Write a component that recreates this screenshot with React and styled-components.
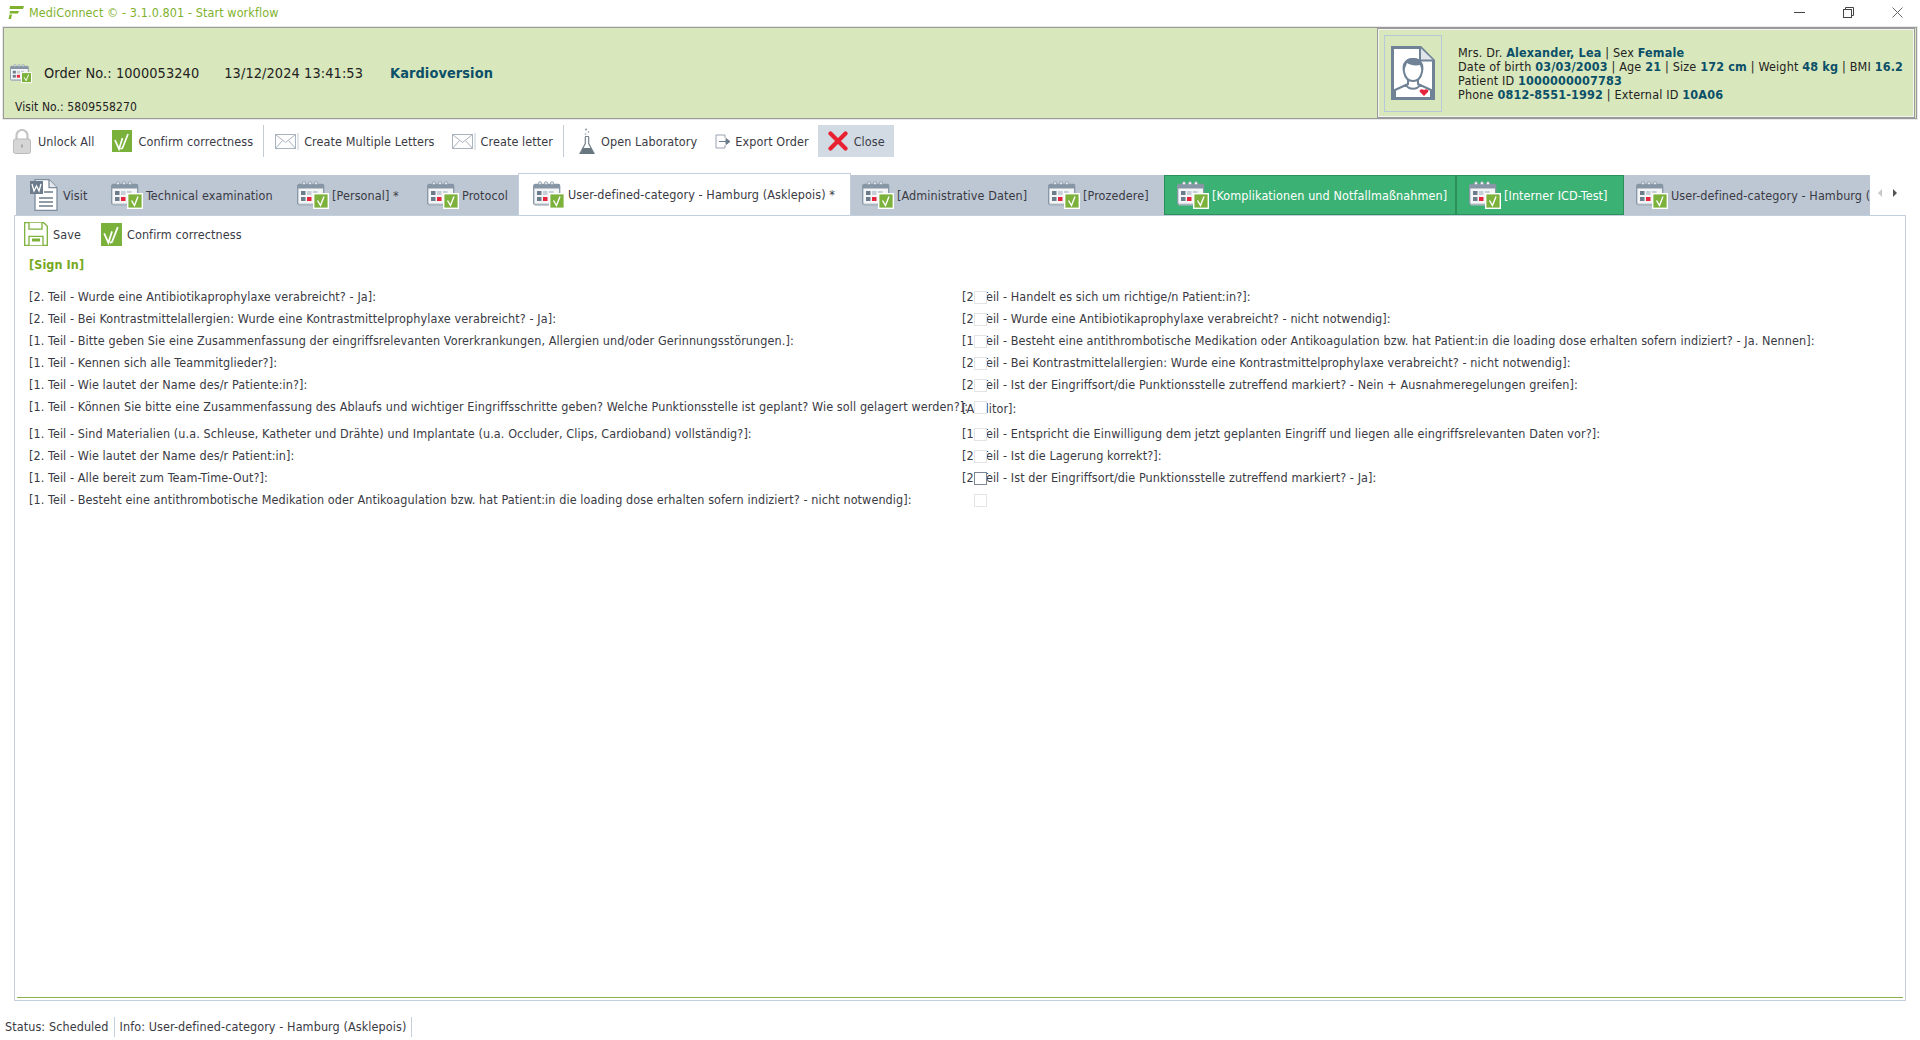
import React from "react";
import styled, { createGlobalStyle } from "styled-components";

const Global = createGlobalStyle`
  html, body { margin: 0; padding: 0; background: #fff; }
  body { width: 1920px; height: 1040px; overflow: hidden; font-family: "DejaVu Sans Condensed", "DejaVu Sans", Tahoma, sans-serif; font-size: 12.5px; letter-spacing: .09px; color: #3a3a44; }
  * { box-sizing: border-box; }
  svg { flex: none; }
`;

const Page = styled.div`
  width: 1920px; height: 1040px; display: flex; flex-direction: column; overflow: hidden;
`;
const TitleBar = styled.div`
  height: 26px; flex: none; display: flex; align-items: center; justify-content: space-between; padding: 0 17px 2px 8px;
`;
const TitleLeft = styled.div`
  display: flex; align-items: center; gap: 5px; color: #7fb22e;
`;
const WindowControls = styled.div`
  display: flex; align-items: center; gap: 38px; color: #555;
`;
const Header = styled.div`
  height: 92px; flex: none; margin: 1px 3px 0 3px; background: #d9e7bc; border: 1px solid #9a9a9a; box-shadow: 0 0 0 1px #e8e8e8; display: flex; justify-content: space-between;
`;
const OrderArea = styled.div`
  display: flex; flex-direction: column; padding: 34px 0 0 6px;
`;
const OrderLine = styled.div`
  display: flex; align-items: center; font-size: 14.4px; letter-spacing: .1px; color: #222; height: 22px;
`;
const OrderIcon = styled.span`
  display: flex; margin-right: 12px;
`;
const OrderDate = styled.span`
  margin-left: 25px;
`;
const OrderTitle = styled.span`
  margin-left: 27px; font-weight: 700; color: #0b5068;
`;
const VisitNo = styled.div`
  color: #222; font-size: 12px; margin: 16px 0 0 5px;
`;
const PatientBox = styled.div`
  width: 538px; margin: 0 1px 0 0; height: 90px; border: 1px solid #9a9a9a; outline: 1px solid #f4f4f4; outline-offset: -2px; display: flex; align-items: center; padding-left: 6px;
`;
const AvatarFrame = styled.div`
  width: 58px; height: 77px; border: 1px solid #b9c8d8; display: flex; align-items: center; justify-content: center; flex: none;
`;
const PatientText = styled.div`
  margin-left: 16px; line-height: 14px; letter-spacing: .17px; color: #222; white-space: nowrap; padding-top: 1px;
`;
const B = styled.b`
  color: #0b5068; font-weight: 700;
`;
const Toolbar = styled.div`
  height: 42px; flex: none; margin-top: 1px; padding-left: 13px; display: flex; align-items: center;
`;
const ToolItem = styled.div`
  display: flex; align-items: center; gap: ${p => p.$gap ?? 6}px; margin-left: ${p => p.$ml ?? 0}px; white-space: nowrap; color: #3a3a44;
`;
const Sep = styled.div`
  width: 1px; height: 32px; background: #c4ccd6; margin: 0 ${p => p.$r ?? 11}px 0 ${p => p.$l ?? 10}px;
`;
const CloseButton = styled.div`
  display: flex; align-items: center; gap: 6px; height: 32px; width: 76px; padding-left: 10px; margin-left: 9px; background: #d2dae4; color: #3a3a44;
`;
const TabRow = styled.div`
  margin-top: 13px; height: 40px; flex: none; display: flex; padding-left: 16px;
`;
const TabStrip = styled.div`
  width: 1854px; height: 40px; background: #bdc7d3; display: flex;
`;
const Tab = styled.div`
  flex: none; width: ${p => p.$w}px; height: ${p => (p.$active ? 42 : 40)}px; margin-top: ${p => (p.$active ? -2 : 0)}px; padding-left: ${p => p.$pl ?? 11}px; display: flex; align-items: center; gap: ${p => p.$gap ?? 3}px; white-space: nowrap; overflow: hidden;
  color: ${p => (p.$green ? "#fff" : "#3a3a44")};
  background: ${p => (p.$active ? "#fff" : p.$green ? "#3bb273" : "transparent")};
  border: ${p => (p.$green ? "1px solid #2c8f5a" : "none")};
  border-top: ${p => (p.$active ? "1px solid #c2cfdc" : p.$green ? "1px solid #2c8f5a" : "none")};
  border-left: ${p => (p.$active ? "1px solid #c2cfdc" : p.$green ? "1px solid #2c8f5a" : "none")};
  border-right: ${p => (p.$active ? "1px solid #c2cfdc" : p.$green ? "1px solid #2c8f5a" : "none")};
  position: relative; z-index: ${p => (p.$active ? 2 : 0)};
`;
const TabLabel = styled.span`
  flex: none;
`;
const TabArrows = styled.div`
  display: flex; align-items: center; gap: 11px; padding: 0 0 4px 8px;
`;
const Arrow = styled.span`
  width: 0; height: 0; border-top: 4px solid transparent; border-bottom: 4px solid transparent;
  ${p => (p.$left ? "border-right: 4px solid #c8c8c8;" : "border-left: 4px solid #555;")}
`;
const Panel = styled.div`
  width: 1892px; height: 786px; flex: none; margin-left: 14px; border: 1px solid #c2cfdc; padding: 0 2px 2px 2px; display: flex; flex-direction: column;
`;
const PanelBody = styled.div`
  flex: 1; border-bottom: 1px solid #8db348; display: flex; flex-direction: column;
`;
const SubToolbar = styled.div`
  height: 32px; margin-top: 2px; padding-left: 7px; display: flex; align-items: center;
`;
const SectionTitle = styled.div`
  margin: 6px 0 0 12px; height: 18px; line-height: 18px; font-weight: 700; color: #76a820;
`;
const Rows = styled.div`
  margin: 12px 0 0 12px; display: flex; flex-direction: column;
`;
const Row = styled.div`
  display: grid; grid-template-columns: 933px 1fr; height: ${p => (p.$tall ? 27 : 22)}px; line-height: 22px; white-space: nowrap;
`;
const RightCell = styled.div`
  position: relative; padding-top: ${p => (p.$tall ? 2 : 0)}px;
`;
const CheckBox = styled.span`
  position: absolute; left: 12px; top: 5px; width: 13px; height: 13px; background: #fff; border: 1px solid ${p => (p.$focus ? "#7b8794" : "#e2e4e8")};
`;
const StatusBar = styled.div`
  flex: 1; display: flex; align-items: center; padding: 12px 0 0 5px;
`;
const StatusItem = styled.div`
  height: 20px; line-height: 20px; padding-right: 5px; margin-right: 5px; border-right: 1px solid #c2cfdc;
`;

const Logo = () => (
  <svg width="16" height="13" viewBox="0 0 16 13">
    <path d="M2 0h14l-1 3H1.500zM2 5h9l-1 2.600H1.500zM1.500 8.500H4L3 13H.5z" fill="#7fb22e" />
  </svg>
);
const WinMin = () => (
  <svg width="11" height="3" viewBox="0 0 11 3"><path d="M0 1.500h11" stroke="#444" /></svg>
);
const WinRestore = () => (
  <svg width="11" height="11" viewBox="0 0 11 11" fill="none" stroke="#444">
    <rect x=".5" y="2.500" width="8" height="8" /><path d="M2.500 2.500v-2h8v8h-2" />
  </svg>
);
const WinClose = () => (
  <svg width="11" height="11" viewBox="0 0 11 11"><path d="M.5.5l10 10M10.500.5l-10 10" stroke="#666" /></svg>
);

const CalendarCheck = ({ w = 32, h = 28, on }) => (
  <svg width={w} height={h} viewBox="0 0 32 28">
    <rect x=".7" y="3.500" width="26" height="20" rx="1.500" fill="#f3f5f7" stroke="#8696a5" strokeWidth="1.300" />
    <path d="M1 7.500h25.500V3.500H1z" fill="#8696a5" />
    <path d="M1 23h24v1.600H2z" fill="#aab5c0" />
    {[7, 13, 19].map(x => (
      <circle key={x} cx={x} cy="2.200" r="1.600" fill={on ? "#f4f4f4" : "#dfe4ea"} stroke="#8696a5" strokeWidth=".7" />
    ))}
    {[4, 10, 16].map(x => <rect key={x} x={x} y="10" width="4.500" height="4" fill={x === 4 ? "#6d7c8b" : "#c6ced6"} />)}
    <rect x="4" y="16" width="4.500" height="4" fill="#6d7c8b" />
    <rect x="10" y="16" width="4.500" height="4" fill="#e8243c" />
    <rect x="16.700" y="12.700" width="14.600" height="14.600" fill="#7cb13c" stroke="#fff" strokeWidth="1.400" />
    <path d="M20.500 19.500l3 5 3.500-9" fill="none" stroke="#fff" strokeWidth="1.400" />
  </svg>
);
const WordDoc = () => (
  <svg width="28" height="32" viewBox="0 0 28 32">
    <path d="M5 .7h14l8 8v22.600H5z" fill="#fff" stroke="#7d8d9c" strokeWidth="1.300" />
    <path d="M19 .7v8h8" fill="#e5e9ed" stroke="#7d8d9c" strokeWidth="1.300" />
    <path d="M14 13h9M9 19h14M9 23h14M9 27h14" stroke="#6d7c8b" strokeWidth="1.600" />
    <rect x="0" y="2" width="13" height="13" fill="#6d7c8b" />
    <path d="M2 5l2 7 2.500-5 2.500 5 2-7" fill="none" stroke="#fff" strokeWidth="1.300" />
  </svg>
);
const ConfirmIcon = ({ w = 20, h = 22 }) => (
  <svg width={w} height={h} viewBox="0 0 20 22">
    <rect width="20" height="22" fill="#79b13b" />
    <path d="M3 10l4 9L10.500 8M8.500 19l2-1 5.500-14" fill="none" stroke="#fff" strokeWidth="1.700" />
  </svg>
);
const LockIcon = () => (
  <svg width="18" height="25" viewBox="0 0 18 25">
    <path d="M3.500 11V6.500a5.500 5.500 0 0 1 11 0V11" fill="none" stroke="#c4c4c4" strokeWidth="2.200" />
    <rect x=".5" y="10" width="17" height="14.500" rx="2" fill="#d6d6d6" stroke="#bbb" />
    <rect x="8" y="15.500" width="2" height="3" fill="#a8a8a8" />
  </svg>
);
const EnvelopeIcon = () => (
  <svg width="24" height="17" viewBox="0 0 24 17" fill="none">
    <rect x=".5" y="1.500" width="20" height="14" fill="#fdfdfd" stroke="#aab4bf" />
    <path d="M.5 1.500l10 8 10-8M.5 15.500l7-8M20.500 15.500l-7-8" stroke="#aab4bf" />
    <path d="M23 0v17" stroke="#c4ccd4" />
  </svg>
);
const FlaskIcon = () => (
  <svg width="16" height="27" viewBox="0 0 16 27">
    <circle cx="7" cy="1.500" r="1" fill="#8a97a3" /><circle cx="9.500" cy="4" r=".8" fill="#8a97a3" /><circle cx="6.500" cy="6" r=".8" fill="#8a97a3" />
    <path d="M6 8.500h4M6.300 9v6.500L1 25.500h14L9.700 15.500V9" fill="#fff" stroke="#75838f" strokeWidth="1.200" />
    <path d="M4 20h8l3 6H1z" fill="#68767f" />
  </svg>
);
const ExportIcon = () => (
  <svg width="17" height="15" viewBox="0 0 17 15" fill="none">
    <path d="M11 4V1H2v13h9v-3" stroke="#98a3ae" />
    <path d="M5 7.500h7V4.500l4 3-4 3v-3" fill="#6d7c8b" stroke="#6d7c8b" />
  </svg>
);
const CloseIcon = () => (
  <svg width="20" height="20" viewBox="0 0 20 20">
    <path d="M2.500 2.500l15 15M17.500 2.500l-15 15" stroke="#e8202f" strokeWidth="4.200" strokeLinecap="round" />
  </svg>
);
const SaveIcon = () => (
  <svg width="24" height="24" viewBox="0 0 24 24" fill="#fff" stroke="#7cb13c" strokeWidth="1.300">
    <path d="M.7.7h19l3.600 3.600v19H.7z" />
    <path d="M5 .7v6.500h13V.7M5 23.300v-9h14v9" />
    <path d="M8 18h8" strokeWidth="3" />
  </svg>
);
const PatientIcon = () => (
  <svg width="44" height="55" viewBox="0 0 44 55">
    <path d="M1.500 1.500h28l13 13v38h-41z" fill="#fff" stroke="#6f8296" strokeWidth="3" />
    <path d="M29 1.500v13h13.500" fill="#dfe5ea" stroke="#6f8296" strokeWidth="2" />
    <path d="M13 26c-2-9 3-13 9-13s11 4 9 13c-1 5-4 9-9 9s-8-4-9-9z" fill="#fff" stroke="#6f8296" strokeWidth="2" />
    <path d="M13 25c-2-9 3-13 9-13s11 4 9 13l-2-6c-5 1-10 0-13-2z" fill="#6f8296" />
    <path d="M17 34v4L4 44v8M27 34v4l13 6v8M15 39c3 5 11 5 14 0" fill="none" stroke="#6f8296" strokeWidth="2" />
    <path d="M33 50l-4-4c-1.500-2 1.500-4 4-2 2.500-2 5.500 0 4 2z" fill="#e8243c" />
  </svg>
);

const tabs = [
  { w: 84, pl: 14, gap: 5, word: true, label: "Visit" },
  { w: 185, label: "Technical examination" },
  { w: 131, pl: 12, label: "[Personal] *" },
  { w: 102, pl: 11, label: "Protocol" },
  { w: 333, pl: 14, active: true, label: "User-defined-category - Hamburg (Asklepois) *" },
  { w: 186, label: "[Administrative Daten]" },
  { w: 127, label: "[Prozedere]" },
  { w: 292, pl: 12, green: true, label: "[Komplikationen und Notfallmaßnahmen]" },
  { w: 168, pl: 12, green: true, label: "[Interner ICD-Test]" },
  { w: 246, pl: 12, label: "User-defined-category - Hamburg (Asklepois)" },
];

const rows = [
  ["[2. Teil - Wurde eine Antibiotikaprophylaxe verabreicht? - Ja]:", "[2. Teil - Handelt es sich um richtige/n Patient:in?]:"],
  ["[2. Teil - Bei Kontrastmittelallergien: Wurde eine Kontrastmittelprophylaxe verabreicht? - Ja]:", "[2. Teil - Wurde eine Antibiotikaprophylaxe verabreicht? - nicht notwendig]:"],
  ["[1. Teil - Bitte geben Sie eine Zusammenfassung der eingriffsrelevanten Vorerkrankungen, Allergien und/oder Gerinnungsstörungen.]:", "[1. Teil - Besteht eine antithrombotische Medikation oder Antikoagulation bzw. hat Patient:in die loading dose erhalten sofern indiziert? - Ja. Nennen]:"],
  ["[1. Teil - Kennen sich alle Teammitglieder?]:", "[2. Teil - Bei Kontrastmittelallergien: Wurde eine Kontrastmittelprophylaxe verabreicht? - nicht notwendig]:"],
  ["[1. Teil - Wie lautet der Name des/r Patiente:in?]:", "[2. Teil - Ist der Eingriffsort/die Punktionsstelle zutreffend markiert? - Nein + Ausnahmeregelungen greifen]:"],
  ["[1. Teil - Können Sie bitte eine Zusammenfassung des Ablaufs und wichtiger Eingriffsschritte geben? Welche Punktionsstelle ist geplant? Wie soll gelagert werden?]:", "[Auditor]:", true],
  ["[1. Teil - Sind Materialien (u.a. Schleuse, Katheter und Drähte) und Implantate (u.a. Occluder, Clips, Cardioband) vollständig?]:", "[1. Teil - Entspricht die Einwilligung dem jetzt geplanten Eingriff und liegen alle eingriffsrelevanten Daten vor?]:"],
  ["[2. Teil - Wie lautet der Name des/r Patient:in]:", "[2. Teil - Ist die Lagerung korrekt?]:"],
  ["[1. Teil - Alle bereit zum Team-Time-Out?]:", "[2. Teil - Ist der Eingriffsort/die Punktionsstelle zutreffend markiert? - Ja]:", false, true],
  ["[1. Teil - Besteht eine antithrombotische Medikation oder Antikoagulation bzw. hat Patient:in die loading dose erhalten sofern indiziert? - nicht notwendig]:", ""],
];

export default function App() {
  return (
    <Page>
      <Global />
      <TitleBar>
        <TitleLeft><Logo /><span>MediConnect © - 3.1.0.801 - Start workflow</span></TitleLeft>
        <WindowControls><WinMin /><WinRestore /><WinClose /></WindowControls>
      </TitleBar>
      <Header>
        <OrderArea>
          <OrderLine>
            <OrderIcon><CalendarCheck w={22} h={21} /></OrderIcon>
            <span>Order No.: 1000053240</span>
            <OrderDate>13/12/2024 13:41:53</OrderDate>
            <OrderTitle>Kardioversion</OrderTitle>
          </OrderLine>
          <VisitNo>Visit No.: 5809558270</VisitNo>
        </OrderArea>
        <PatientBox>
          <AvatarFrame><PatientIcon /></AvatarFrame>
          <PatientText>
            <div>Mrs. Dr. <B>Alexander, Lea</B> | Sex <B>Female</B></div>
            <div>Date of birth <B>03/03/2003</B> | Age <B>21</B> | Size <B>172 cm</B> | Weight <B>48 kg</B> | BMI <B>16.2</B></div>
            <div>Patient ID <B>1000000007783</B></div>
            <div>Phone <B>0812-8551-1992</B> | External ID <B>10A06</B></div>
          </PatientText>
        </PatientBox>
      </Header>
      <Toolbar>
        <ToolItem $gap={7}><LockIcon />Unlock All</ToolItem>
        <ToolItem $ml={18}><ConfirmIcon />Confirm correctness</ToolItem>
        <Sep />
        <ToolItem $gap={5}><EnvelopeIcon />Create Multiple Letters</ToolItem>
        <ToolItem $ml={17} $gap={5}><EnvelopeIcon />Create letter</ToolItem>
        <Sep $l={10} $r={15} />
        <ToolItem $gap={6}><FlaskIcon />Open Laboratory</ToolItem>
        <ToolItem $ml={17} $gap={4}><ExportIcon />Export Order</ToolItem>
        <CloseButton><CloseIcon />Close</CloseButton>
      </Toolbar>
      <TabRow>
        <TabStrip>
          {tabs.map(t => (
            <Tab key={t.label} $w={t.w} $pl={t.pl} $gap={t.gap} $active={t.active} $green={t.green}>
              {t.word ? <WordDoc /> : <CalendarCheck on={t.green} />}
              <TabLabel>{t.label}</TabLabel>
            </Tab>
          ))}
        </TabStrip>
        <TabArrows><Arrow $left /><Arrow /></TabArrows>
      </TabRow>
      <Panel>
        <PanelBody>
          <SubToolbar>
            <ToolItem $gap={5}><SaveIcon />Save</ToolItem>
            <ToolItem $ml={20} $gap={5}><ConfirmIcon w={21} h={23} />Confirm correctness</ToolItem>
          </SubToolbar>
          <SectionTitle>[Sign In]</SectionTitle>
          <Rows>
            {rows.map(([l, r, tall, focus], i) => (
              <Row key={i} $tall={tall}>
                <div>{l}</div>
                <RightCell $tall={tall}>{r}<CheckBox $focus={focus} /></RightCell>
              </Row>
            ))}
          </Rows>
        </PanelBody>
      </Panel>
      <StatusBar>
        <StatusItem>Status: Scheduled</StatusItem>
        <StatusItem>Info: User-defined-category - Hamburg (Asklepois)</StatusItem>
      </StatusBar>
    </Page>
  );
}
